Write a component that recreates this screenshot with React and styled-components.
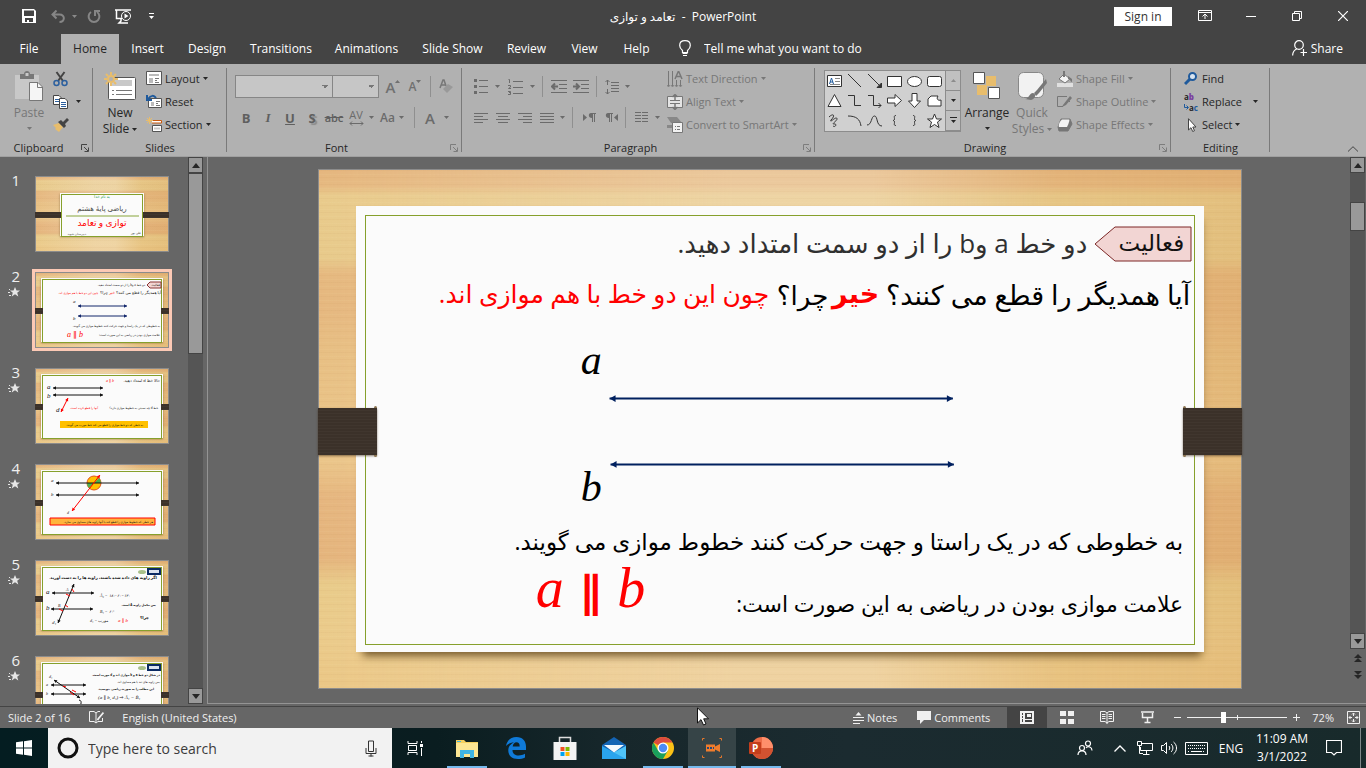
import styled, { createGlobalStyle, css } from 'styled-components';

const GlobalStyle = createGlobalStyle`
  * {
    box-sizing: border-box;
  }
  body {
    margin: 0;
    overflow: hidden;
    background: #666666;
    font-family: 'Open Sans', 'DejaVu Sans', sans-serif;
    font-size: 12px;
    color: #262626;
  }
  button, input, select {
    margin: 0;
    padding: 0;
    border: none;
    background: none;
    color: inherit;
    font: inherit;
  }
`;

const Ico = ({ w = 16, h = 16, children, ...rest }) => (
  <St.Svg width={w} height={h} viewBox={`0 0 ${w} ${h}`} fill='none' stroke='currentColor' aria-hidden='true' {...rest}>
    {children}
  </St.Svg>
);

const Caret = () => (
  <Ico w={5} h={3} stroke='none'>
    <path d='M0 0H5L2.5 3Z' fill='currentColor' />
  </Ico>
);

const Launcher = ({ off }) => (
  <St.Launcher aria-label='More options' $off={off}>
    <Ico w={8} h={8}>
      <path d='M.5 6V.5H6M3 3L7 7M7.5 3.5V7.5H3.5' />
    </Ico>
  </St.Launcher>
);

const Group = ({ title, width, launcher, off, children }) => (
  <St.Group $w={width}>
    <St.GroupBody>{children}</St.GroupBody>
    <St.GroupFoot>
      <St.GroupTitle>{title}</St.GroupTitle>
      {launcher && <Launcher off={off} />}
    </St.GroupFoot>
  </St.Group>
);

const TABS = [
  ['File', 58],
  ['Home', 58],
  ['Insert', 51],
  ['Design', 62],
  ['Transitions', 80],
  ['Animations', 85],
  ['Slide Show', 81],
  ['Review', 61],
  ['View', 49],
  ['Help', 49],
];

const TitleBar = () => (
  <St.TitleBar>
    <St.QuickAccess>
      <St.Tool $w={30} aria-label='Save'>
        <Ico w={14} h={14} stroke='none'>
          <path
            fill='#fff'
            fillRule='evenodd'
            d='M0 0H12L14 2V14H0ZM2 1.500V7H12V1.500ZM3 9V13H5V11H7V13H11V9Z'
          />
        </Ico>
      </St.Tool>
      <St.Tool $w={28} $c='#868686' aria-label='Undo'>
        <Ico w={14} h={13} strokeWidth='2'>
          <path d='M5.500 .500L1.500 4.500L5.500 8.500M1.500 4.500H8.500C14.500 4.500 14 12 8.500 12' />
        </Ico>
      </St.Tool>
      <St.Tool $w={4} $c='#8a8a8a' aria-label='Undo history'>
        <Caret />
      </St.Tool>
      <St.Tool $w={35} $c='#868686' aria-label='Redo'>
        <Ico w={14} h={14} strokeWidth='2'>
          <path d='M4 3A5.400 5.400 0 1 0 10 3M8 7V2H13' />
        </Ico>
      </St.Tool>
      <St.Tool $w={24} aria-label='Start from beginning'>
        <Ico w={17} h={15}>
          <path d='M0 1H16M1.500 1V9.500H7M6 10V12L4 14H13' strokeWidth='1.500' />
          <circle cx='11' cy='7' r='4.500' />
          <path d='M9.500 4.500L13.500 7L9.500 9.500Z' fill='currentColor' stroke='none' />
        </Ico>
      </St.Tool>
      <St.Tool $w={34} aria-label='Customize toolbar'>
        <Ico w={6} h={7} stroke='none'>
          <path d='M0 0H5V1H0ZM0 3H5L2.500 6Z' fill='currentColor' />
        </Ico>
      </St.Tool>
    </St.QuickAccess>
    <St.Title>تعامد و توازی &nbsp;-&nbsp; PowerPoint</St.Title>
    <St.WindowTools>
      <St.SignIn>Sign in</St.SignIn>
      <St.Tool $w={46} aria-label='Ribbon display options'>
        <Ico w={14} h={12}>
          <path d='M.5 .5H13.500V10.500H.5ZM.5 2.500H13.500M7 9V4.500M4.500 6.500L7 4L9.500 6.500' />
        </Ico>
      </St.Tool>
      <St.Tool $w={46} aria-label='Minimize'>
        <Ico w={10} h={10}>
          <path d='M0 5.500H10' />
        </Ico>
      </St.Tool>
      <St.Tool $w={46} aria-label='Restore'>
        <Ico w={10} h={10}>
          <path d='M.5 2.500H7.500V9.500H.5ZM2.500 2.500V.5H9.500V7.500H7.500' />
        </Ico>
      </St.Tool>
      <St.Tool $w={46} aria-label='Close'>
        <Ico w={10} h={10}>
          <path d='M0 0L10 10M10 0L0 10' strokeWidth='1.200' />
        </Ico>
      </St.Tool>
    </St.WindowTools>
  </St.TitleBar>
);

const TabBar = () => (
  <St.TabBar>
    {TABS.map(([name, width]) => (
      <St.Tab key={name} $w={width} $on={name === 'Home'}>
        {name}
      </St.Tab>
    ))}
    <St.TellMe>
      <Ico w={12} h={16}>
        <path d='M3.500 12.500V10.500C1.500 9 .7 7.500 .7 5.500C.7 2.500 3 .7 6 .7S11.300 2.500 11.300 5.500C11.300 7.500 10.500 9 8.500 10.500V12.500ZM3.500 13.500H8.500M4 15.500H8' strokeWidth='1.200' />
      </Ico>
      <St.TellInput aria-label='Tell me what you want to do' placeholder='Tell me what you want to do' />
    </St.TellMe>
    <St.Share>
      <Ico w={15} h={16}>
        <circle cx='7' cy='5' r='4.300' strokeWidth='1.200' />
        <path d='M.6 15.500C.8 11.500 2.500 9.800 5 8.800M8.500 12.500H15M11.500 9V16' strokeWidth='1.200' />
      </Ico>
      Share
    </St.Share>
  </St.TabBar>
);

const ClipboardGroup = () => (
  <Group title='Clipboard' width={93} launcher>
    <St.Big $w={44} $off $ml={7}>
      <Ico w={28} h={30} stroke='none'>
        <path d='M0 4H24V28H0Z' fill='#c8c8c8' />
        <path d='M5 3H9C9 -1 15 -1 15 3H19V8H5Z' fill='#777' />
        <rect x='10.500' y='2' width='3' height='3' fill='#c8c8c8' />
        <path d='M14.500 11.500H23L27.500 16V29.500H14.500Z' fill='#f5f5f5' stroke='#777' />
        <path d='M22.500 11.500V16.500H27.500' stroke='#777' fill='none' />
      </Ico>
      <span>Paste</span>
      <Caret />
    </St.Big>
    <St.Column>
      <St.Small aria-label='Cut'>
        <Ico w={16} h={16}>
          <path d='M3.500 1L10 10M11.500 1L5 10' stroke='#444' strokeWidth='2' />
          <circle cx='3.500' cy='12' r='2.500' stroke='#2b5f9e' strokeWidth='1.500' />
          <circle cx='11.500' cy='12' r='2.500' stroke='#2b5f9e' strokeWidth='1.500' />
        </Ico>
      </St.Small>
      <St.Small aria-label='Copy'>
        <Ico w={16} h={14}>
          <path d='M.5 .5H6L8.500 3V9.500H.5Z' fill='#fff' stroke='#444' />
          <path d='M2 4.500H6M2 6.500H6' stroke='#2b5f9e' />
          <path d='M6.500 3.500H12L14.500 6V13.500H6.500Z' fill='#fff' stroke='#444' />
          <path d='M8 7.500H13M8 9.500H13M8 11.500H13' stroke='#2b5f9e' />
        </Ico>
        <St.CaretPad>
          <Caret />
        </St.CaretPad>
      </St.Small>
      <St.Small aria-label='Format painter'>
        <Ico w={16} h={14} stroke='none'>
          <path d='M0 7L6 5L10 9L6 14L2 11L3 10Z' fill='#e8bd6c' />
          <path d='M5 4L8 2L10 4L14 0L16 2L12 6L13 8L11 10Z' fill='#444' />
        </Ico>
      </St.Small>
    </St.Column>
  </Group>
);

const SlidesGroup = () => (
  <Group title='Slides' width={134}>
    <St.Big $w={48} $ml={3}>
      <Ico w={32} h={28}>
        <rect x='4.500' y='5.500' width='27' height='22' rx='1' fill='#fff' stroke='#555' />
        <path d='M7 8H28V14H7Z' fill='#c8c8c8' stroke='none' />
        <path d='M8 18.500H10M12 18.500H28M8 22.500H10M12 22.500H28' stroke='#777' />
        <circle cx='7' cy='7' r='3' stroke='#e8bd6c' strokeWidth='2' fill='#b1b1b1' />
        <path d='M7 0V3M7 11V14M0 7H3M11 7H14M2 2L4 4M12 2L10 4M2 12L4 10M12 12L10 10' stroke='#e8bd6c' strokeWidth='2' />
      </Ico>
      <span>New</span>
      <St.Inline>
        Slide <Caret />
      </St.Inline>
    </St.Big>
    <St.Column>
      <St.Small>
        <Ico w={16} h={15}>
          <path d='M.5 .5H15.500V13.500H.5Z' fill='#fff' stroke='#555' />
          <path d='M3 3H13V5H3ZM3 7H7V12H3Z' fill='#bbb' stroke='none' />
          <path d='M9 7.500H13M9 9.500H11M9 11.500H13' stroke='#777' />
        </Ico>
        Layout <Caret />
      </St.Small>
      <St.Small>
        <Ico w={16} h={15}>
          <path d='M2.500 4.500H15.500V13.500H2.500Z' fill='#fff' stroke='#555' />
          <path d='M5 8H8V12H5Z' fill='#bbb' stroke='none' />
          <path d='M10 7.500H14M10 9.500H12M10 11.500H14' stroke='#777' />
          <path d='M1 1V6H6M2 5C5 1 8 1 10 4' stroke='#1f5a9c' strokeWidth='2' />
        </Ico>
        Reset
      </St.Small>
      <St.Small>
        <Ico w={16} h={15}>
          <path d='M6 3.500H15.500V6H6' stroke='#c8590f' fill='#fff' />
          <path d='M6.500 8.500H15.500V14.500H6.500Z' fill='#fff' stroke='#555' />
          <path d='M8 10.500H14V12.500H8Z' fill='#c8c8c8' stroke='none' />
          <path d='M3.500 0V7M0 3.500H7M1 1L6 6M6 1L1 6' stroke='#e8bd6c' />
        </Ico>
        Section <Caret />
      </St.Small>
    </St.Column>
  </Group>
);

const FontGroup = () => (
  <Group title='Font' width={235} launcher off>
    <St.Rows>
      <St.ToolRow>
        <St.Combo $w={98} aria-label='Font' />
        <St.Combo $w={46} $join aria-label='Font size' />
        <St.Tool $w={22} $c='#707070' aria-label='Increase font size'>
          <St.Letter $size={15}>A</St.Letter>
          <Ico w={5} h={14} stroke='none'>
            <path d='M0 3H5L2.500 0Z' fill='currentColor' />
          </Ico>
        </St.Tool>
        <St.Tool $w={22} $c='#707070' aria-label='Decrease font size'>
          <St.Letter $size={12}>A</St.Letter>
          <Ico w={5} h={14} stroke='none'>
            <path d='M0 0H5L2.500 3Z' fill='currentColor' />
          </Ico>
        </St.Tool>
        <St.Rule $m={4} />
        <St.Tool $w={22} $c='#777' aria-label='Clear formatting'>
          <Ico w={14} h={15}>
            <path d='M1 9L4 1H5L7 7M2 6H6' strokeWidth='1.500' />
            <path d='M4 10L9 5L14 8L8 14Z' fill='#999' stroke='none' />
          </Ico>
        </St.Tool>
      </St.ToolRow>
      <St.ToolRow>
        <St.Glyph $b>B</St.Glyph>
        <St.Glyph $i>I</St.Glyph>
        <St.Glyph $u>U</St.Glyph>
        <St.Glyph $b $shadow>
          S
        </St.Glyph>
        <St.Glyph $s>abc</St.Glyph>
        <St.Tool $w={22} $c='#6b6b6b' aria-label='Character spacing'>
          <St.Stack>
            <span>AV</span>
            <Ico w={15} h={5}>
              <path d='M1 2.500H14M3 .5L1 2.500L3 4.500M12 .5L14 2.500L12 4.500' />
            </Ico>
          </St.Stack>
        </St.Tool>
        <St.Tool $w={9} $c='#6b6b6b' aria-label='Spacing options'>
          <Caret />
        </St.Tool>
        <St.Tool $w={32} $c='#6b6b6b'>
          <St.Letter $size={12}>Aa</St.Letter>
          <St.CaretPad>
            <Caret />
          </St.CaretPad>
        </St.Tool>
        <St.Rule $m={6} />
        <St.Tool $w={18} $c='#6b6b6b'>
          <St.Letter $size={15}>A</St.Letter>
        </St.Tool>
        <St.Tool $w={14} $c='#6b6b6b' aria-label='Font colors'>
          <Caret />
        </St.Tool>
      </St.ToolRow>
    </St.Rows>
  </Group>
);

const LINES = {
  left: ['M0 .5H14', 'M0 3.500H9', 'M0 6.500H14', 'M0 9.500H9'],
  center: ['M0 .5H14', 'M2 3.500H12', 'M0 6.500H14', 'M2 9.500H12'],
  right: ['M0 .5H14', 'M5 3.500H14', 'M0 6.500H14', 'M5 9.500H14'],
  justify: ['M0 .5H14', 'M0 3.500H14', 'M0 6.500H14', 'M0 9.500H14'],
};

const Indent = ({ out }) => (
  <Ico w={16} h={14}>
    <path d='M0 .5H16M8 4.500H16M8 8.500H16M0 12.500H16' />
    {out ? <path d='M7 6.500H1M4 3.500L1 6.500L4 9.500' strokeWidth='2' /> : <path d='M0 6.500H6M3 3.500L6 6.500L3 9.500' strokeWidth='2' />}
  </Ico>
);

const ParagraphGroup = () => (
  <Group title='Paragraph' width={353} launcher off>
    <St.Rows $w={203}>
      <St.ToolRow>
        <St.Tool $w={22} $c='#6b6b6b' aria-label='Bullets'>
          <Ico w={14} h={15}>
            <path d='M5 1.500H14M5 7.500H14M5 13.500H14' />
            <path d='M0 0H3V3H0ZM0 6H3V9H0ZM0 12H3V15H0Z' fill='currentColor' stroke='none' />
          </Ico>
        </St.Tool>
        <St.Tool $w={11} $c='#6b6b6b' aria-label='Bullet styles'>
          <Caret />
        </St.Tool>
        <St.Tool $w={24} $c='#6b6b6b' aria-label='Numbering'>
          <Ico w={15} h={16}>
            <path d='M5 2.500H15M5 8.500H15M5 14.500H15M.5 .5H1.500V4M0 6.500H2.500V8L.5 9.500H3M0 12.500H2.500V15.500H0M1 13.500H2.500' />
          </Ico>
        </St.Tool>
        <St.Tool $w={10} $c='#6b6b6b' aria-label='Number styles'>
          <Caret />
        </St.Tool>
        <St.Rule $m={5} />
        <St.Tool $w={22} $c='#6b6b6b' aria-label='Decrease indent'>
          <Indent out />
        </St.Tool>
        <St.Tool $w={22} $c='#6b6b6b' aria-label='Increase indent'>
          <Indent />
        </St.Tool>
        <St.Rule $m={4} />
        <St.Tool $w={22} $c='#6b6b6b' aria-label='Line spacing'>
          <Ico w={14} h={16}>
            <path d='M6 3.500H14M6 6.500H14M6 9.500H14M6 12.500H14M2.500 1V6M2.500 10V15M.5 3L2.500 1L4.500 3M.5 13L2.500 15L4.500 13' />
          </Ico>
        </St.Tool>
        <St.Tool $w={9} $c='#6b6b6b' aria-label='Spacing options'>
          <Caret />
        </St.Tool>
      </St.ToolRow>
      <St.ToolRow>
        {Object.entries(LINES).map(([name, lines]) => (
          <St.Tool key={name} $w={22} $c='#6b6b6b' aria-label={`Align ${name}`}>
            <Ico w={14} h={10}>
              <path d={lines.join('')} />
            </Ico>
          </St.Tool>
        ))}
        <St.Tool $w={9} $c='#6b6b6b' aria-label='Justify options'>
          <Caret />
        </St.Tool>
        <St.Rule $m={5} />
        <St.Tool $w={22} $c='#6b6b6b' aria-label='Left to right'>
          <Ico w={13} h={9} stroke='none'>
            <path d='M0 1V8L4 4.500ZM8 0H13V1H12V9H11V1H10V9H9V5C5 5 5 0 8 0Z' fill='currentColor' />
          </Ico>
        </St.Tool>
        <St.Tool $w={22} $c='#6b6b6b' aria-label='Right to left'>
          <Ico w={13} h={9} stroke='none'>
            <path d='M13 1V8L9 4.500ZM3 0H8V1H7V9H6V1H5V9H4V5C0 5 0 0 3 0Z' fill='currentColor' />
          </Ico>
        </St.Tool>
        <St.Rule $m={3} />
        <St.Tool $w={24} $c='#6b6b6b' aria-label='Columns'>
          <Ico w={13} h={11}>
            <path d='M0 .5H6M0 3.500H6M0 6.500H6M0 9.500H6M7 .5H13M7 3.500H13M7 6.500H13M7 9.500H13' />
          </Ico>
        </St.Tool>
        <St.Tool $w={8} $c='#6b6b6b' aria-label='Column options'>
          <Caret />
        </St.Tool>
      </St.ToolRow>
    </St.Rows>
    <St.Column>
      <St.Small $off>
        <Ico w={16} h={16}>
          <path d='M1.500 0V15M5.500 0V15M9.500 9V15M13.500 9V15' />
          <path d='M0 14L1.500 16L3 14M4 14L5.500 16L7 14M8 14L9.500 16L11 14M12 14L13.500 16L15 14' strokeWidth='.8' />
          <path d='M8 8L11.500 0L15 8M9 5.500H14' strokeWidth='1.500' />
        </Ico>
        Text Direction <Caret />
      </St.Small>
      <St.Small $off>
        <Ico w={16} h={16}>
          <path d='M.5 2.500H15.500V13.500H.5Z' fill='#e4e4e4' />
          <path d='M3 6.500H13M3 9.500H13' />
          <path d='M8 0V6M8 10V16M5.500 3L8 .5L10.500 3M5.500 13L8 15.500L10.500 13' strokeWidth='1.500' />
        </Ico>
        Align Text <Caret />
      </St.Small>
      <St.Small $off>
        <Ico w={16} h={16}>
          <path d='M0 0H10L15 6H4Z' fill='#888' stroke='none' />
          <path d='M0 8H5V11H0Z' fill='#888' stroke='none' />
          <path d='M5.500 5.500H15.500V15.500H5.500Z' fill='#f2f2f2' />
          <path d='M8 9.500H9M10 9.500H13M8 12.500H9M10 12.500H13' />
        </Ico>
        Convert to SmartArt <Caret />
      </St.Small>
    </St.Column>
  </Group>
);

const SHAPES = [
  <><path d='M.5 2.500H14.500V13.500H.5Z' fill='#fff' /><path d='M2.500 11L4.500 5L6.500 11M3 9H6' stroke='#1f5a9c' /><path d='M8 5.500H13M8 8.500H13M3 11.500H13' stroke='#888' /></>,
  <path d='M1 1L14 14' />,
  <><path d='M1 1L14 14' /><path d='M14.500 10V14.500H10Z' fill='#333' /></>,
  <path d='M.5 3.500H14.500V13.500H.5Z' fill='#fff' />,
  <ellipse cx='7.500' cy='8.500' rx='7' ry='5' fill='#fff' />,
  <rect x='.5' y='3.500' width='14' height='10' rx='2' fill='#fff' />,
  <path d='M7.500 1.500L14 13.500H1Z' fill='#fff' />,
  <path d='M1 2.500H7.500V12.500H14' />,
  <path d='M1 2.500H6.500V12.500H14M11.500 10L14 12.500L11.500 15' />,
  <path d='M.5 5H8V1.500L14.500 7.500L8 13.500V10H.5Z' fill='#fff' />,
  <path d='M5 .5H10V8H13.500L7.500 14.500L1.500 8H5Z' fill='#fff' />,
  <path d='M4 3H11C9 6 11 8 14 7V13H1V6Z' fill='#fff' />,
  <path d='M2 4C6 0 9 2 4 7C2 11 10 2 10 6C10 8 4 11 7 11C10 10 9 15 6 13' />,
  <path d='M1 3C9 3 13 6 14 13' />,
  <path d='M0 12C5 12 4 3 7.500 3C11 3 9 13 15 13' />,
  <path d='M9 2.500C6.500 2.500 7.500 4.500 7.500 6C7.500 7.500 6 7.500 6 7.500C6 7.500 7.500 7.500 7.500 9C7.500 11 6.500 12.500 9 12.500' />,
  <path d='M6 2.500C8.500 2.500 7.500 4.500 7.500 6C7.500 7.500 9 7.500 9 7.500C9 7.500 7.500 7.500 7.500 9C7.500 11 8.500 12.500 6 12.500' />,
  <path d='M7.500 1L9.500 6H14.500L10.500 9L12 14.500L7.500 11.500L3 14.500L4.500 9L.5 6H5.500Z' fill='#fff' />,
];

const DrawingGroup = () => (
  <Group title='Drawing' width={356} launcher off>
    <St.Gallery>
      <St.Shapes>
        {SHAPES.map((shape, i) => (
          <St.Shape key={i} aria-label={`Shape ${i + 1}`}>
            <Ico w={15} h={16} stroke='#333'>
              {shape}
            </Ico>
          </St.Shape>
        ))}
      </St.Shapes>
      <St.GalleryScroll>
        <St.Tool $c='#8c8c8c' aria-label='Previous shapes'>
          <Ico w={5} h={3} stroke='none'>
            <path d='M0 3H5L2.500 0Z' fill='currentColor' />
          </Ico>
        </St.Tool>
        <St.Tool $c='#262626' aria-label='Next shapes'>
          <Caret />
        </St.Tool>
        <St.Tool $c='#262626' aria-label='All shapes'>
          <Ico w={7} h={7} stroke='none'>
            <path d='M0 0H7V1H0ZM1 3H6L3.500 6Z' fill='currentColor' />
          </Ico>
        </St.Tool>
      </St.GalleryScroll>
    </St.Gallery>
    <St.Big $w={50}>
      <Ico w={28} h={28}>
        <path d='M13 4H23V14H13ZM4 13H14V23H4Z' fill='#e8bd6c' stroke='none' />
        <path d='M.5 .5H11.500V11.500H.5ZM15.500 15.500H26.500V26.500H15.500Z' fill='#fff' stroke='#555' />
      </Ico>
      <span>Arrange</span>
      <Caret />
    </St.Big>
    <St.Big $w={40} $off>
      <Ico w={30} h={30}>
        <rect x='1.500' y='1.500' width='25' height='25' rx='5' fill='#f2f2f2' stroke='#888' />
        <path d='M29 8L20 19L17 22L19 25L22 22L30 12Z' fill='#777' stroke='none' />
        <path d='M8 28C12 28 12 22 16 22C20 23 18 28 14 29Z' fill='#777' stroke='none' />
      </Ico>
      <span>Quick</span>
      <St.Inline>
        Styles <Caret />
      </St.Inline>
    </St.Big>
    <St.Column $ml={3}>
      <St.Small $off>
        <Ico w={16} h={16} stroke='none'>
          <path d='M0 12H16V16H0Z' fill='#e0e0e0' />
          <path d='M7 3L13 8L8 12L2 8Z' fill='#f4f4f4' stroke='#777' />
          <path d='M6 0H8V6H6ZM11 5L15 8V11C13 11 14 8 11 8Z' fill='#777' />
        </Ico>
        Shape Fill <Caret />
      </St.Small>
      <St.Small $off>
        <Ico w={16} h={16}>
          <path d='M10 2.500H.5V12.500H6M12.500 7V8' />
          <path d='M6 11L13 2L15 4L9 11L5 13Z' fill='#777' stroke='none' />
        </Ico>
        Shape Outline <Caret />
      </St.Small>
      <St.Small $off>
        <Ico w={16} h={14}>
          <path d='M4 1H13L15 6L11 13H2L1 9Z' fill='#777' />
          <path d='M5 1.500H12C13 1.500 12 5 10 9H2C1 7 3 3 5 1.500Z' fill='#f4f4f4' stroke='none' />
        </Ico>
        Shape Effects <Caret />
      </St.Small>
    </St.Column>
  </Group>
);

const EditingGroup = () => (
  <Group title='Editing' width={99}>
    <St.Column $ml={11}>
      <St.Small>
        <Ico w={15} h={14}>
          <circle cx='8.500' cy='4.500' r='3.500' stroke='#1f5a9c' strokeWidth='2' fill='#d8e4f0' />
          <path d='M6 7L1 12' stroke='#1f5a9c' strokeWidth='3' />
        </Ico>
        Find
      </St.Small>
      <St.Small>
        <St.Swap>
          <span>
            a<b>b</b>
          </span>
          <span>
            <Ico w={5} h={6} stroke='#1f5a9c'>
              <path d='M.5 0V3.500H4M2.500 1.500L4.500 3.500L2.500 5.500' />
            </Ico>
            a<i>c</i>
          </span>
        </St.Swap>
        Replace
        <St.CaretPad $wide>
          <Caret />
        </St.CaretPad>
      </St.Small>
      <St.Small>
        <Ico w={15} h={14}>
          <path d='M4.500 .700V12L7 9.700L8.700 13.500L10.500 12.700L8.800 9H12Z' fill='#fff' stroke='#444' />
        </Ico>
        Select <Caret />
      </St.Small>
    </St.Column>
  </Group>
);

const Ribbon = () => (
  <St.Ribbon>
    <ClipboardGroup />
    <SlidesGroup />
    <FontGroup />
    <ParagraphGroup />
    <DrawingGroup />
    <EditingGroup />
    <St.Collapse aria-label='Collapse the ribbon'>
      <Ico w={12} h={6}>
        <path d='M1 5.500L6 .7L11 5.500' />
      </Ico>
    </St.Collapse>
  </St.Ribbon>
);

const Arrow = ({ x1, y1, x2, y2, color = '#111', w = 1, size = 3 }) => {
  const a = (Math.atan2(y2 - y1, x2 - x1) * 180) / Math.PI;
  const head = `M0 0L${-size} ${-size / 1.8}V${size / 1.8}Z`;
  return (
    <g fill={color} stroke='none'>
      <line x1={x1} y1={y1} x2={x2} y2={y2} stroke={color} strokeWidth={w} />
      <path d={head} transform={`translate(${x2} ${y2}) rotate(${a})`} />
      <path d={head} transform={`translate(${x1} ${y1}) rotate(${a + 180})`} />
    </g>
  );
};

const ThumbOne = () => (
  <>
    <St.Tiny x='66' y='21' $size={4} $mid $c='#1a9a50'>به نام خدا</St.Tiny>
    <St.Tiny x='66' y='34' $size={7} $mid $c='#444'>ریاضی پایهٔ هشتم</St.Tiny>
    <path d='M30 39H103' stroke='#87a53a' />
    <St.Tiny x='66' y='49' $size={9} $mid $c='#f00'>توازی و تعامد</St.Tiny>
    <St.Tiny x='105' y='57' $size={3}>علی پور</St.Tiny>
    <St.Tiny x='50' y='58' $size={3} $c='#555'>دبیرستان شهید</St.Tiny>
  </>
);

const ThumbTwo = () => (
  <>
    <path d='M125 9V15H114L111 12L114 9Z' fill='#f2d5d3' stroke='#8a3434' />
    <St.Tiny x='124' y='13' $size={3}>فعالیت</St.Tiny>
    <St.Tiny x='109' y='13' $size={3}>دو خط a وb را از دو سمت امتداد دهید.</St.Tiny>
    <St.Tiny x='125' y='21' $size={4}>آیا همدیگر را قطع می کنند؟</St.Tiny>
    <St.Tiny x='79' y='21' $size={4} $c='#f00'>خیر</St.Tiny>
    <St.Tiny x='72' y='21' $size={4}>چرا؟</St.Tiny>
    <St.Tiny x='62' y='21' $size={3} $c='#f00'>چون این دو خط با هم موازی اند.</St.Tiny>
    <St.TinyMath x='37' y='30' $size={5}>a</St.TinyMath>
    <Arrow x1={42} y1={33} x2={91} y2={33} color='#12276b' />
    <Arrow x1={42} y1={43} x2={91} y2={43} color='#12276b' />
    <St.TinyMath x='37' y='47' $size={5}>b</St.TinyMath>
    <St.Tiny x='124' y='54' $size={3}>به خطوطی که در یک راستا و جهت حرکت کنند خطوط موازی می گویند.</St.Tiny>
    <St.Tiny x='124' y='63' $size={3}>علامت موازی بودن در ریاضی به این صورت است:</St.Tiny>
    <St.TinyMath x='31' y='64' $size={8} $c='#f00'>a ∥ b</St.TinyMath>
  </>
);

const ThumbThree = () => (
  <>
    <St.Tiny x='124' y='13' $size={4}>حالا خط d امتداد دهید.</St.Tiny>
    <St.TinyMath x='70' y='13' $size={4} $c='#f00'>a ∥ b</St.TinyMath>
    <St.TinyMath x='11' y='20' $size={7}>a</St.TinyMath>
    <Arrow x1={17} y1={19} x2={67} y2={19} />
    <St.TinyMath x='11' y='29' $size={7}>b</St.TinyMath>
    <Arrow x1={17} y1={26} x2={67} y2={26} />
    <St.TinyMath x='20' y='43' $size={7}>d</St.TinyMath>
    <Arrow x1={25} y1={43} x2={32} y2={29} color='#f00' />
    <St.Tiny x='122' y='40' $size={3}>خط d چه نسبتی به خطوط موازی دارد؟</St.Tiny>
    <St.Tiny x='62' y='40' $size={3} $c='#f00'>آنها را قطع کرده است.</St.Tiny>
    <path d='M24 52H112V59H24Z' fill='#ffc000' />
    <St.Tiny x='107' y='57' $size={3}>به خطی که دو خط موازی را قطع می کند خط مورب می گویند.</St.Tiny>
  </>
);

const ThumbFour = () => (
  <>
    <circle cx='58' cy='18' r='7' fill='#ffc000' stroke='#e2531a' />
    <path d='M58 18H51A7 7 0 0 0 53 23ZM58 18H65A7 7 0 0 0 63 13Z' fill='#4db050' />
    <St.TinyMath x='15' y='17' $size={5}>a</St.TinyMath>
    <Arrow x1={20} y1={18} x2={103} y2={18} />
    <St.TinyMath x='15' y='31' $size={5}>b</St.TinyMath>
    <Arrow x1={20} y1={30} x2={103} y2={30} />
    <Arrow x1={36} y1={46} x2={64} y2={10} color='#f00' />
    <St.TinyMath x='31' y='49' $size={4}>d</St.TinyMath>
    <path d='M14 53H119V60H14Z' fill='#ffb43c' stroke='#f00' />
    <St.Tiny x='117' y='58' $size={3}>هر خطی که خطوط موازی را قطع کند،با آنها زاویه های مساوی می سازد.</St.Tiny>
  </>
);

const ThumbFive = () => (
  <>
    <path d='M112 8H124V13H112Z' fill='#dce3ef' stroke='#0b2a63' strokeWidth='2' />
    <ellipse cx='106' cy='11' rx='4' ry='2' fill='#a9c08a' />
    <St.Tiny x='121' y='18' $size={4} $bold>اگر زاویه های داده شده باشند، زاویه ها را به دست آورید.</St.Tiny>
    <St.TinyMath x='10' y='33' $size={7}>a</St.TinyMath>
    <Arrow x1={16} y1={32} x2={58} y2={32} />
    <St.TinyMath x='10' y='49' $size={7}>b</St.TinyMath>
    <Arrow x1={15} y1={48} x2={57} y2={48} />
    <Arrow x1={22} y1={62} x2={38} y2={23} />
    <St.TinyMath x='30' y='30' $size={4}>A</St.TinyMath>
    <St.TinyMath x='22' y='46' $size={4}>B</St.TinyMath>
    <path d='M30 33L34 35M36 28L38 31M23 48L27 50M29 44L32 46' stroke='#f00' />
    <St.TinyMath x='16' y='63' $size={5}>d₁</St.TinyMath>
    <St.TinyMath x='64' y='36' $size={4}>Â₂ = ۱۸۰−۶۰=۱۲۰</St.TinyMath>
    <St.Tiny x='120' y='45' $size={3} $bold>پس مکمل زاویه A است.</St.Tiny>
    <St.TinyMath x='64' y='52' $size={4}>B₁ = ۶۰°</St.TinyMath>
    <St.TinyMath x='54' y='61' $size={4}>d₁ = مورب</St.TinyMath>
    <St.TinyMath x='82' y='61' $size={5} $c='#f00'>a ∥ b</St.TinyMath>
    <St.Tiny x='113' y='58' $size={4} $bold>چرا؟</St.Tiny>
  </>
);

const ThumbSix = () => (
  <>
    <path d='M112 8H124V13H112Z' fill='#dce3ef' stroke='#0b2a63' strokeWidth='2' />
    <ellipse cx='106' cy='11' rx='4' ry='2' fill='#a9c08a' />
    <St.Tiny x='124' y='19' $size={3} $bold>در شکل دو خط a و b موازی اند و d مورب است.</St.Tiny>
    <St.Tiny x='124' y='26' $size={3}>پس زاویه های تند با هم مساوی اند.</St.Tiny>
    <St.Tiny x='118' y='33' $size={3} $bold>این مطلب را به صورت ریاضی بنویسید.</St.Tiny>
    <Arrow x1={15} y1={28} x2={50} y2={28} />
    <Arrow x1={15} y1={37} x2={50} y2={37} />
    <Arrow x1={18} y1={23} x2={44} y2={41} />
    <path d='M34 35L38 38M36 33L40 35M27 29L30 30' stroke='#f00' />
    <St.TinyMath x='13' y='21' $size={4}>d₁</St.TinyMath>
    <St.TinyMath x='10' y='29' $size={4}>a</St.TinyMath>
    <St.TinyMath x='10' y='38' $size={4}>b</St.TinyMath>
    <St.TinyMath x='62' y='42' $size={5}>(a ∥ b, d₁) ⇒ Â₁ = B̂₁</St.TinyMath>
    <path d='M43 43C48 44 42 50 46 52' stroke='#111' fill='none' />
  </>
);

const THUMBS = [ThumbOne, ThumbTwo, ThumbThree, ThumbFour, ThumbFive, ThumbSix];

const SlideBase = ({ small, cover }) => (
  <>
    <St.Paper $small={small} $cover={cover} />
    <St.Clip $side='left' $cover={cover} $small={small} />
    <St.Clip $side='right' $cover={cover} $small={small} />
  </>
);

const ScrollBar = ({ before, size, foot, children }) => (
  <St.ScrollBar $foot={foot}>
    <St.ScrollButton aria-label='Scroll up'>
      <Ico w={8} h={5} stroke='none'>
        <path d='M0 5H8L4 0Z' fill='#262626' />
      </Ico>
    </St.ScrollButton>
    <St.ScrollTrack $before={before}>
      <St.ScrollThumb $h={size} />
    </St.ScrollTrack>
    <St.ScrollButton aria-label='Scroll down'>
      <Ico w={8} h={5} stroke='none'>
        <path d='M0 0H8L4 5Z' fill='#262626' />
      </Ico>
    </St.ScrollButton>
    {children}
  </St.ScrollBar>
);

const ThumbPane = () => (
  <St.ThumbPane>
    <St.ThumbList>
      {THUMBS.map((Drawing, i) => (
        <St.ThumbItem key={i}>
          <St.ThumbMeta>
            {i + 1}
            {i > 0 && (
              <Ico w={12} h={10} stroke='none'>
                <path d='M7 0L8.500 3.500H12L9.200 5.800L10.300 9.500L7 7.300L3.700 9.500L4.800 5.800L2 3.500H5.500Z' fill='#e6e6e6' />
                <path d='M1 2H2V3H1ZM0 5H2V6H0ZM1 8H3V9H1Z' fill='#e6e6e6' />
              </Ico>
            )}
          </St.ThumbMeta>
          <St.Thumb $on={i === 1} aria-label={`Slide ${i + 1}`}>
            <SlideBase small cover={i === 0} />
            <St.ThumbDrawing viewBox='0 0 132 74'>
              <Drawing />
            </St.ThumbDrawing>
          </St.Thumb>
        </St.ThumbItem>
      ))}
    </St.ThumbList>
    <ScrollBar before={0} size={181} />
  </St.ThumbPane>
);

const Stage = () => (
  <St.Stage>
    <St.StageCenter>
      <St.Slide>
        <SlideBase />
        <St.Callout>
          <svg viewBox='0 0 98 36' preserveAspectRatio='none' aria-hidden='true'>
            <path d='M1 18L21 1H97V35H21Z' fill='#f2d5d3' stroke='#7c2727' />
          </svg>
          <span>فعالیت</span>
        </St.Callout>
        <St.Line $top={53} $right={154} $size={26} $c='#303030'>
          دو خط a وb را از دو سمت امتداد دهید.
        </St.Line>
        <St.Line $top={105} $right={51} $size={27}>
          آیا همدیگر را قطع می کنند؟
        </St.Line>
        <St.Line $top={103} $right={362} $size={27} $c='#ff0000' $bold>
          خیر
        </St.Line>
        <St.Line $top={105} $right={413} $size={26}>
          چرا؟
        </St.Line>
        <St.Line $top={103} $right={472} $size={25} $c='#ff0000'>
          چون این دو خط با هم موازی اند.
        </St.Line>
        <St.Math $top={160} $left={262} $size={42}>a</St.Math>
        <St.SlideLines viewBox='0 0 922 519'>
          <Arrow x1={290} y1={229} x2={634} y2={229} color='#00205f' w={2} size={6} />
          <Arrow x1={291} y1={295} x2={635} y2={295} color='#00205f' w={2} size={6} />
        </St.SlideLines>
        <St.Math $top={287} $left={262} $size={42}>b</St.Math>
        <St.Line $top={351} $right={58} $size={23}>
          به خطوطی که در یک راستا و جهت حرکت کنند خطوط موازی می گویند.
        </St.Line>
        <St.Line $top={413} $right={58} $size={22}>
          علامت موازی بودن در ریاضی به این صورت است:
        </St.Line>
        <St.Math $top={388} $left={217} $size={56} $c='#ff0000'>
          a <i>∥</i> b
        </St.Math>
      </St.Slide>
    </St.StageCenter>
    <ScrollBar before={29} size={29} foot={20}>
      <St.ScrollJump aria-label='Previous slide'>
        <Ico w={8} h={8} stroke='none'>
          <path d='M0 4H8L4 0ZM0 8H8L4 4Z' fill='#262626' />
        </Ico>
      </St.ScrollJump>
      <St.ScrollJump aria-label='Next slide'>
        <Ico w={8} h={8} stroke='none'>
          <path d='M0 0H8L4 4ZM0 4H8L4 8Z' fill='#262626' />
        </Ico>
      </St.ScrollJump>
    </ScrollBar>
  </St.Stage>
);

const StatusBar = () => (
  <St.StatusBar>
    <span>Slide 2 of 16</span>
    <St.Tool $w={52} aria-label='Spelling'>
      <Ico w={15} h={13}>
        <path d='M7 12V2L5 .5H.5V10.500H5L7 12L9 10.500H13.500V7M7 2L9 .5H11' />
        <path d='M14.500 1.500L9.500 7.500L8.500 9' strokeWidth='1.800' />
      </Ico>
    </St.Tool>
    <span>English (United States)</span>
    <St.Spacer />
    <St.StatusButton $mr={20}>
      <Ico w={11} h={12}>
        <path d='M0 5.500H11M0 8.500H11M0 11.500H7' />
        <path d='M2.500 3.500L5.500 0L8.500 3.500Z' fill='currentColor' stroke='none' />
      </Ico>
      Notes
    </St.StatusButton>
    <St.StatusButton $mr={17}>
      <Ico w={14} h={13} stroke='none'>
        <path d='M0 0H14V9H7L3 13V9H0Z' fill='currentColor' />
      </Ico>
      Comments
    </St.StatusButton>
    <St.View $on aria-label='Normal view'>
      <Ico w={14} h={13} stroke='none'>
        <path d='M0 0H14V13H0ZM2 2V4H3V2ZM2 5V7H3V5ZM2 8V11H3V8ZM5 2V8H12V2ZM5 9V11H12V9Z' fill='currentColor' fillRule='evenodd' />
        <path d='M7 3H11V6H7Z' fill='currentColor' />
      </Ico>
    </St.View>
    <St.View aria-label='Slide sorter'>
      <Ico w={14} h={13} stroke='none'>
        <path d='M0 0H6V5H0ZM8 0H14V5H8ZM0 8H6V13H0ZM8 8H14V13H8Z' fill='currentColor' />
      </Ico>
    </St.View>
    <St.View aria-label='Reading view'>
      <Ico w={14} h={13}>
        <path d='M7 2V13M.5 .5H5L7 2L9 .5H13.500V10.500H9L7 12L5 10.500H.5ZM2 3.500H5.500M2 5.500H5.500M2 7.500H5.500M8.500 3.500H12M8.500 5.500H12M8.500 7.500H12' />
      </Ico>
    </St.View>
    <St.View aria-label='Slide show'>
      <Ico w={13} h={13}>
        <path d='M0 1H13M1.500 2V6.500H11.500V2M6.500 7V11M3.500 11.500H9.500' strokeWidth='1.500' />
      </Ico>
    </St.View>
    <St.Tool $w={20} aria-label='Zoom out'>
      <Ico w={7} h={7}>
        <path d='M0 3.500H7' />
      </Ico>
    </St.Tool>
    <St.Zoom type='range' aria-label='Zoom' defaultValue={35} />
    <St.Tool $w={18} aria-label='Zoom in'>
      <Ico w={7} h={7}>
        <path d='M0 3.500H7M3.500 0V7' />
      </Ico>
    </St.Tool>
    <St.StatusButton $mr={9} $ml={7}>
      72%
    </St.StatusButton>
    <St.Tool $w={20} aria-label='Fit slide to window'>
      <Ico w={13} h={13}>
        <path d='M.5 .5H12.500V12.500H.5Z' />
        <path d='M6.500 2V5M6.500 8V11M2 6.500H5M8 6.500H11M5 3.500L6.500 2L8 3.500M5 9.500L6.500 11L8 9.500M3.500 5L2 6.500L3.500 8M9.500 5L11 6.500L9.500 8' />
      </Ico>
    </St.Tool>
  </St.StatusBar>
);

const TaskBar = () => (
  <St.TaskBar>
    <St.Start aria-label='Start'>
      <Ico w={16} h={16} stroke='none'>
        <path d='M0 2.300L7 1.300V7.500H0ZM8 1.200L16 0V7.500H8ZM0 8.500H7V14.700L0 13.700ZM8 8.500H16V16L8 14.800Z' fill='#fff' />
      </Ico>
    </St.Start>
    <St.Search>
      <Ico w={22} h={22}>
        <circle cx='11' cy='11' r='9' strokeWidth='3' stroke='#111' />
      </Ico>
      <St.SearchInput aria-label='Search' placeholder='Type here to search' />
      <Ico w={12} h={17}>
        <path d='M3.500 1H8.500V11.500H3.500ZM1 8V13.500H11V8M6 14V16.500M3.500 16H8.500' stroke='#333' />
      </Ico>
    </St.Search>
    <St.Apps>
      <St.App aria-label='Task view'>
        <Ico w={17} h={16}>
          <path d='M1 1V3.500H10V1M1 15V12.500H10V15M1.500 5.500H9.500V10.500H1.500ZM14.500 1V3M14.500 8V16' />
          <path d='M13 4H16V7H13Z' fill='currentColor' stroke='none' />
        </Ico>
      </St.App>
      <St.App $run aria-label='File Explorer'>
        <Ico w={22} h={19} stroke='none'>
          <path d='M0 1H8L10 3H22V18H0Z' fill='#f5cf5e' />
          <path d='M0 4H22V18H0Z' fill='#fde694' />
          <path d='M4 11H18V19H14V15H8V19H4Z' fill='#3fb4e5' />
          <path d='M1 2H5V3H1Z' fill='#3fb4e5' />
        </Ico>
      </St.App>
      <St.App aria-label='Edge'>
        <Ico w={20} h={22} stroke='none'>
          <path
            d='M0 9C1 3 5 0 10.500 0C16.500 0 20 4 20 9.500V13H6.500C6.500 17 9.500 18.500 12.500 18.500C15 18.500 17 17.800 19 16.800V20.500C17 21.500 14.500 22 12 22C6 22 2.300 18.500 2.300 13.500C2.300 9.500 4.500 7 8 5.500C4.500 5.500 1.700 7 0 9ZM6.700 9.500H13.700C13.700 6.500 12.500 5.200 10.500 5.200C8.500 5.200 7 7 6.700 9.500Z'
            fill='#0f7ad8'
            fillRule='evenodd'
          />
        </Ico>
      </St.App>
      <St.App aria-label='Store'>
        <Ico w={24} h={25} stroke='none'>
          <path d='M6.500 6V1.500H17.500V6' stroke='#ddd' strokeWidth='1.500' fill='none' />
          <path d='M.5 6H23.500V24H.5Z' fill='#f3f3f3' />
          <path d='M7.500 11H11.500V15H7.500Z' fill='#f25022' />
          <path d='M12.500 11H16.500V15H12.500Z' fill='#7fba00' />
          <path d='M7.500 16H11.500V20H7.500Z' fill='#00a4ef' />
          <path d='M12.500 16H16.500V20H12.500Z' fill='#ffb900' />
        </Ico>
      </St.App>
      <St.App aria-label='Mail'>
        <Ico w={24} h={22} stroke='none'>
          <path d='M0 8L12 0L24 8V22H0Z' fill='#1464b4' />
          <path d='M0 9L12 15.500L24 9V22H0Z' fill='#2aa4ee' />
          <path d='M12 15.500L24 9V22Z' fill='#4fc3f7' />
          <path d='M2 8H22L12 15.500Z' fill='#f4f8fc' />
        </Ico>
      </St.App>
      <St.App $run aria-label='Chrome'>
        <Ico w={22} h={22} stroke='none'>
          <circle cx='11' cy='11' r='11' fill='#fbc116' />
          <path d='M11 11L1.470 5.500A11 11 0 0 1 20.530 5.500H11Z' fill='#dd4b3e' />
          <path d='M1.470 5.500A11 11 0 0 0 11 22L15.800 13.700L6.200 13.700Z' fill='#1a9f5c' />
          <circle cx='11' cy='11' r='5.500' fill='#fff' />
          <circle cx='11' cy='11' r='4.200' fill='#4c8bf5' />
        </Ico>
      </St.App>
      <St.App $run $on aria-label='Screen recorder'>
        <Ico w={20} h={20}>
          <path d='M.5 2.500V.5H2.500M17.500 .5H19.500V2.500M.5 17.500V19.500H2.500M17.500 19.500H19.500V17.500' stroke='#e8792b' />
          <path d='M4 6.500H13V8.500L18 6V14L13 11.500V13.500H4Z' fill='#f07c2c' stroke='none' />
          <path d='M5 9H7V11H5ZM8 9H10V11H8ZM11 9H12V11H11Z' fill='#264a7a' stroke='none' />
        </Ico>
      </St.App>
      <St.App $run aria-label='PowerPoint'>
        <Ico w={24} h={22} stroke='none'>
          <circle cx='13' cy='11' r='11' fill='#ed6c47' />
          <path d='M13 0A11 11 0 0 1 24 11H13Z' fill='#ff8f6b' />
          <path d='M24 11A11 11 0 0 1 2 11Z' fill='#d35230' />
          <rect x='0' y='5' width='12' height='12' rx='1' fill='#c43e1c' />
          <text x='3' y='15' fontSize='10' fontWeight='700' fill='#fff'>
            P
          </text>
        </Ico>
      </St.App>
    </St.Apps>
    <St.Spacer />
    <St.Tray>
      <St.Tool $w={44} aria-label='People'>
        <Ico w={16} h={16}>
          <circle cx='11' cy='3.500' r='2.500' strokeWidth='1.200' />
          <circle cx='5' cy='8' r='2.500' strokeWidth='1.200' />
          <path d='M1 15C1 9.500 9 9.500 9 15M9 8C11 5.500 15 7 15 10.500' strokeWidth='1.200' />
        </Ico>
      </St.Tool>
      <St.Tool $w={26} aria-label='Hidden icons'>
        <Ico w={12} h={7}>
          <path d='M.5 6.500L6 1L11.500 6.500' strokeWidth='1.300' />
        </Ico>
      </St.Tool>
      <St.Tool $w={24} aria-label='Network'>
        <Ico w={16} h={14}>
          <path d='M5 2.500H15.500V9.500H3.500V6M9.500 10V13M6 13.500H12.500M.5 .5H4.500V4.500H.5ZM2.500 5V12.500H6' />
        </Ico>
      </St.Tool>
      <St.Tool $w={24} aria-label='Volume'>
        <Ico w={17} h={14}>
          <path d='M.5 4.500H2.500L5.500 1.500V12.500L2.500 9.500H.5ZM8 5C9 6 9 8 8 9M10 3C12.500 5 12.500 9 10 11M12.500 1C16.500 4 16.500 10 12.500 13' />
        </Ico>
      </St.Tool>
      <St.Tool $w={30} aria-label='Keyboard'>
        <Ico w={23} h={13}>
          <path d='M.5 .5H22.500V12.500H.5ZM6 9.500H17' />
          <path d='M3 3.500H20M3 6.500H20M3 9.500H5M18 9.500H20' strokeDasharray='1 1' />
        </Ico>
      </St.Tool>
      <St.Tool $w={40}>ENG</St.Tool>
      <St.Clock>
        <span>11:09 AM</span>
        <span>3/1/2022</span>
      </St.Clock>
      <St.Tool $w={42} aria-label='Notifications'>
        <Ico w={16} h={16}>
          <path d='M.5 .5H15.500V12.500H10.500L8 15L5.500 12.500H.5Z' strokeWidth='1.200' />
        </Ico>
      </St.Tool>
      <St.Peek aria-label='Show desktop' />
    </St.Tray>
  </St.TaskBar>
);

const App = () => (
  <>
    <GlobalStyle />
    <St.Window>
      <TitleBar />
      <TabBar />
      <Ribbon />
      <St.Workspace>
        <ThumbPane />
        <Stage />
      </St.Workspace>
      <StatusBar />
      <TaskBar />
      <St.Cursor width='12' height='19' viewBox='0 0 12 19' aria-hidden='true'>
        <path d='M.5 .8V16L4 12.600L6.500 18L9 17L6.700 11.800H11.500Z' fill='#fff' stroke='#111' />
      </St.Cursor>
    </St.Window>
  </>
);

export default App;

const wood = css`
  background-image: repeating-linear-gradient(
      180deg,
      rgba(150, 90, 30, 0.04) 0 1px,
      transparent 1px 4px,
      rgba(255, 240, 200, 0.05) 4px 5px,
      transparent 5px 7px
    ),
    linear-gradient(
      90deg,
      transparent,
      rgba(244, 226, 200, 0.4) 45%,
      rgba(244, 226, 200, 0.4) 60%,
      rgba(205, 145, 70, 0.1) 80%,
      rgba(205, 145, 70, 0.2)
    ),
    linear-gradient(
      180deg,
      #e5b67e 0%,
      #e6b981 3%,
      #e9cb8c 5%,
      #e8ca8b 17%,
      #e6b980 20%,
      #e6b880 27%,
      #e8c084 36%,
      #ebc68a 56%,
      #e6b67f 63%,
      #e5b57d 75%,
      #e9cb8a 80%,
      #ebcb8b 90%,
      #ebc786 100%
    );
`;

const St = {
  Window: styled.div`
    display: flex;
    flex-direction: column;
    height: 100vh;
    min-height: 600px;
  `,
  Svg: styled.svg`
    display: block;
    flex: none;
  `,
  Spacer: styled.div`
    flex: 1;
  `,
  Inline: styled.span`
    display: flex;
    align-items: center;
    gap: 3px;
  `,
  Tool: styled.button`
    display: flex;
    align-items: center;
    justify-content: center;
    flex: none;
    width: ${({ $w }) => ($w ? `${$w}px` : 'auto')};
    height: 100%;
    color: ${({ $c }) => $c || 'inherit'};
  `,

  TitleBar: styled.header`
    display: grid;
    grid-template-columns: 1fr auto 1fr;
    align-items: center;
    height: 32px;
    background: #444444;
    color: #ffffff;
  `,
  QuickAccess: styled.div`
    display: flex;
    height: 32px;
    padding-left: 14px;
  `,
  Title: styled.h1`
    margin: 0;
    font-size: 12px;
    font-weight: 400;
  `,
  WindowTools: styled.div`
    display: flex;
    align-items: center;
    justify-content: flex-end;
    height: 30px;
  `,
  SignIn: styled.button`
    width: 58px;
    height: 19px;
    margin-right: 10px;
    background: #ffffff;
    color: #333333;
  `,

  TabBar: styled.nav`
    display: flex;
    gap: 3px;
    height: 32px;
    padding-top: 2px;
    background: #444444;
    color: #ffffff;
  `,
  Tab: styled.button`
    flex: none;
    width: ${({ $w }) => $w}px;
    padding-bottom: 2px;
    white-space: nowrap;
    background: ${({ $on }) => ($on ? '#b1b1b1' : 'transparent')};
    color: ${({ $on }) => ($on ? '#262626' : '#ffffff')};
  `,
  TellMe: styled.label`
    display: flex;
    align-items: center;
    gap: 13px;
    margin-left: 15px;
    padding-bottom: 2px;
  `,
  TellInput: styled.input`
    width: 180px;

    &::placeholder {
      color: #ffffff;
      opacity: 1;
    }
  `,
  Share: styled.button`
    display: flex;
    align-items: center;
    gap: 4px;
    margin-left: auto;
    padding: 0 23px 2px 0;
  `,

  Ribbon: styled.div`
    display: flex;
    height: 93px;
    background: #b1b1b1;
    border-bottom: 1px solid #a0a0a0;
  `,
  Group: styled.section`
    position: relative;
    display: flex;
    flex-direction: column;
    flex: none;
    width: ${({ $w }) => $w}px;

    &::after {
      content: '';
      position: absolute;
      top: 4px;
      right: 0;
      bottom: 4px;
      width: 1px;
      background: #7a7a7a;
    }
  `,
  GroupBody: styled.div`
    display: flex;
    height: 75px;
    padding-top: 3px;
  `,
  GroupFoot: styled.div`
    display: flex;
    align-items: center;
    height: 17px;
    font-size: 11px;
  `,
  GroupTitle: styled.span`
    flex: 1;
    text-align: center;
  `,
  Launcher: styled.button`
    display: flex;
    justify-content: center;
    width: 16px;
    color: ${({ $off }) => ($off ? '#7d7d7d' : '#444444')};
  `,
  Big: styled.button`
    display: flex;
    flex-direction: column;
    align-items: center;
    flex: none;
    width: ${({ $w }) => $w}px;
    margin-left: ${({ $ml = 0 }) => $ml}px;
    padding-top: 3px;
    line-height: 16px;
    color: ${({ $off }) => ($off ? '#777777' : '#262626')};

    > svg:first-child {
      height: 32px;
      margin-bottom: 3px;
    }
    > svg:last-child {
      margin-top: 6px;
    }
  `,
  Column: styled.div`
    display: flex;
    flex-direction: column;
    margin-left: ${({ $ml = 0 }) => $ml}px;
  `,
  Small: styled.button`
    display: flex;
    align-items: center;
    gap: 3px;
    height: 23px;
    padding: 0 2px;
    white-space: nowrap;
    font-size: 11px;
    color: ${({ $off }) => ($off ? '#777777' : '#262626')};
  `,
  CaretPad: styled.span`
    padding-left: ${({ $wide }) => ($wide ? 8 : 4)}px;
  `,
  Rows: styled.div`
    display: flex;
    flex-direction: column;
    flex: none;
    gap: 8px;
    width: ${({ $w }) => ($w ? `${$w}px` : '100%')};
    padding: 8px 0 0 8px;
  `,
  ToolRow: styled.div`
    display: flex;
    align-items: center;
    height: 23px;
  `,
  Rule: styled.span`
    width: 1px;
    height: 21px;
    margin: 0 ${({ $m }) => $m}px;
    background: #8f8f8f;
  `,
  Combo: styled.select`
    width: ${({ $w }) => $w}px;
    height: 23px;
    margin-right: ${({ $join }) => ($join ? '3px' : 0)};
    border: 1px solid #868686;
    border-left-width: ${({ $join }) => ($join ? 0 : '1px')};
    border-radius: 0;
    appearance: none;
    background: linear-gradient(45deg, transparent 50%, #777777 50%) right 7px center / 3px 3px no-repeat,
      linear-gradient(-45deg, transparent 50%, #777777 50%) right 4px center / 3px 3px no-repeat, #c6c6c6;
  `,
  Letter: styled.span`
    font-size: ${({ $size }) => $size}px;
    font-weight: 600;
    line-height: 20px;
  `,
  Glyph: styled.button`
    width: 22px;
    height: 23px;
    color: #5f5f5f;
    font-size: ${({ $s }) => ($s ? 11 : 13)}px;
    font-weight: ${({ $b, $u }) => ($b || $u ? 700 : 600)};
    font-style: ${({ $i }) => ($i ? 'italic' : 'normal')};
    font-family: ${({ $i }) => ($i ? "'Liberation Serif', serif" : 'inherit')};
    text-decoration: ${({ $u, $s }) => ($u ? 'underline' : $s ? 'line-through' : 'none')};
    text-shadow: ${({ $shadow }) => ($shadow ? '2px 2px 1px #8a8a8a' : 'none')};
  `,
  Stack: styled.span`
    display: flex;
    flex-direction: column;
    align-items: center;
    font-size: 11px;
    line-height: 12px;
  `,
  Gallery: styled.div`
    display: flex;
    flex: none;
    width: 137px;
    height: 62px;
    margin: 3px 1px 0 9px;
    border: 1px solid #8c8c8c;
    background: #d0d0d0;
  `,
  Shapes: styled.div`
    display: grid;
    grid-template-columns: repeat(6, 20px);
    grid-template-rows: repeat(3, 20px);
  `,
  Shape: styled.button`
    display: flex;
    align-items: center;
    justify-content: center;
    padding-right: 1px;
  `,
  GalleryScroll: styled.div`
    display: grid;
    flex: 1;
    grid-template-rows: repeat(3, 20px);

    button {
      border-left: 1px solid #8c8c8c;
      border-bottom: 1px solid #8c8c8c;
      background: #c0c0c0;
    }
  `,
  Swap: styled.span`
    display: flex;
    flex-direction: column;
    width: 15px;
    font-size: 8px;
    font-weight: 700;
    line-height: 11px;

    span {
      display: flex;
      align-items: center;
    }
    b {
      color: #7a3da0;
    }
    i {
      font-style: normal;
      color: #1f5a9c;
    }
  `,
  Collapse: styled.button`
    align-self: flex-end;
    margin: 0 7px 4px auto;
    color: #444444;
  `,

  Workspace: styled.div`
    display: flex;
    flex: 1;
    min-height: 0;
    padding-bottom: 2px;
    background: #666666;
  `,
  ThumbPane: styled.aside`
    display: flex;
    flex: none;
    width: 208px;
    border-right: 1px solid #949494;
  `,
  ThumbList: styled.div`
    flex: none;
    width: 188px;
    padding-top: 16px;
    overflow: hidden;
  `,
  ThumbItem: styled.div`
    display: flex;
    height: 96px;
    padding-top: 4px;
  `,
  ThumbMeta: styled.div`
    display: flex;
    flex-direction: column;
    align-items: flex-end;
    gap: 8px;
    width: 20px;
    margin-right: 16px;
    font-size: 15px;
    line-height: 6px;
    color: #f0f0f0;
  `,
  Thumb: styled.button`
    position: relative;
    width: 132px;
    height: 74px;
    outline: 1px solid #8c8c8c;
    box-shadow: ${({ $on }) => ($on ? '0 0 0 1px #666666, 0 0 0 4px #fcc9b5' : 'none')};
    ${wood}
  `,
  ThumbDrawing: styled.svg`
    position: absolute;
    inset: 0;
    width: 100%;
    height: 100%;
    font-family: 'Open Sans', 'DejaVu Sans', sans-serif;
  `,
  Tiny: styled.text`
    direction: rtl;
    fill: ${({ $c }) => $c || '#111111'};
    font-size: ${({ $size }) => $size}px;
    font-weight: ${({ $bold }) => ($bold ? 700 : 400)};
    text-anchor: ${({ $mid }) => ($mid ? 'middle' : 'start')};
  `,
  TinyMath: styled.text`
    fill: ${({ $c }) => $c || '#111111'};
    font-family: 'Liberation Serif', 'DejaVu Sans', serif;
    font-size: ${({ $size }) => $size}px;
    font-style: italic;
  `,

  ScrollBar: styled.div`
    display: flex;
    flex-direction: column;
    flex: none;
    width: 15px;
    padding-bottom: ${({ $foot = 0 }) => $foot}px;
    background: #666666;
  `,
  ScrollButton: styled.button`
    display: flex;
    align-items: center;
    justify-content: center;
    width: 15px;
    height: 16px;
    border: 1px solid #444444;
    background: #999999;
  `,
  ScrollTrack: styled.div`
    flex: 1;
    padding-top: ${({ $before }) => $before}px;
    background: #555555;
  `,
  ScrollThumb: styled.div`
    height: ${({ $h }) => $h}px;
    border: 1px solid #444444;
    background: #999999;
  `,
  ScrollJump: styled.button`
    display: flex;
    justify-content: center;
    height: 17px;
    padding-top: 5px;
  `,

  Stage: styled.main`
    display: flex;
    flex: 1;
    min-width: 0;
    padding-right: 1px;
    border-bottom: 1px solid #949494;
  `,
  StageCenter: styled.div`
    display: flex;
    flex: 1;
    align-items: flex-start;
    justify-content: center;
    min-width: 0;
    padding: 12px 0 14px 2px;
  `,
  Slide: styled.div`
    position: relative;
    height: 100%;
    aspect-ratio: 16 / 9;
    border: 1px solid #8c8c8c;
    ${wood}
  `,
  Paper: styled.div`
    position: absolute;
    top: ${({ $cover }) => ($cover ? '21%' : '7%')};
    right: ${({ $cover }) => ($cover ? '18%' : '4%')};
    bottom: ${({ $cover }) => ($cover ? '20%' : '7%')};
    left: ${({ $cover }) => ($cover ? '18%' : '4%')};
    padding: ${({ $small }) => ($small ? 1 : 9)}px;
    background: #fbfbfb;
    box-shadow: ${({ $small }) =>
      $small ? '0 1px 2px rgba(80, 50, 10, 0.5)' : '2px 9px 8px -5px rgba(80, 55, 15, 0.75)'};

    &::before {
      content: '';
      display: block;
      height: 100%;
      border: 1px solid #86a02c;
    }
  `,
  Clip: styled.div`
    position: absolute;
    top: ${({ $small }) => ($small ? '47%' : '46%')};
    ${({ $side }) => $side}: -1px;
    width: ${({ $cover }) => ($cover ? '20%' : '6%')};
    height: ${({ $small }) => ($small ? '8%' : '9%')};
    min-width: ${({ $small }) => ($small ? 0 : '59px')};
    background: repeating-linear-gradient(180deg, #3b3129 0 2px, #40362e 2px 3px);
    box-shadow: ${({ $small }) => ($small ? 'none' : '0 1px 2px rgba(60, 40, 20, 0.6)')};

    &::before {
      content: '';
      display: ${({ $small }) => ($small ? 'none' : 'block')};
      position: absolute;
      top: -2px;
      bottom: -2px;
      ${({ $side }) => ($side === 'left' ? 'right' : 'left')}: 0;
      width: 3px;
      border-radius: 2px;
      background: linear-gradient(#8a7350 0 2px, transparent 2px calc(100% - 2px), #8a7350 calc(100% - 2px));
    }
  `,
  SlideLines: styled.svg`
    position: absolute;
    inset: 0;
    width: 100%;
    height: 100%;
  `,
  Callout: styled.div`
    position: absolute;
    top: 56px;
    right: 49px;
    width: 98px;
    height: 36px;
    direction: rtl;
    font-size: 23px;
    line-height: 32px;
    color: #111111;

    svg {
      position: absolute;
      inset: 0;
      width: 100%;
      height: 100%;
    }
    span {
      position: relative;
      padding-right: 8px;
    }
  `,
  Line: styled.p`
    position: absolute;
    top: ${({ $top }) => $top}px;
    right: ${({ $right }) => $right}px;
    margin: 0;
    direction: rtl;
    white-space: nowrap;
    font-size: ${({ $size }) => $size}px;
    font-weight: ${({ $bold }) => ($bold ? 700 : 400)};
    line-height: 40px;
    color: ${({ $c }) => $c || '#000000'};
  `,
  Math: styled.p`
    position: absolute;
    top: ${({ $top }) => $top}px;
    left: ${({ $left }) => $left}px;
    margin: 0;
    white-space: pre;
    font-family: 'Liberation Serif', 'DejaVu Sans', serif;
    font-size: ${({ $size }) => $size}px;
    font-style: italic;
    line-height: 60px;
    color: ${({ $c }) => $c || '#000000'};

    i {
      margin: 0 2px;
      font-size: 43px;
      font-style: normal;
      font-weight: 700;
    }
  `,

  StatusBar: styled.footer`
    display: flex;
    align-items: center;
    height: 22px;
    padding: 0 3px 0 8px;
    border-top: 1px solid #444444;
    background: #666666;
    font-size: 11px;
    color: #f0f0f0;
  `,
  StatusButton: styled.button`
    display: flex;
    align-items: center;
    gap: 3px;
    margin: 0 ${({ $mr }) => $mr}px 0 ${({ $ml = 0 }) => $ml}px;
  `,
  View: styled.button`
    display: flex;
    align-items: center;
    justify-content: center;
    width: 40px;
    height: 100%;
    background: ${({ $on }) => ($on ? '#444444' : 'transparent')};
  `,
  Zoom: styled.input`
    width: 100px;
    height: 12px;
    appearance: none;
    background: linear-gradient(#f0f0f0, #f0f0f0) center / 100% 1px no-repeat,
      linear-gradient(#f0f0f0, #f0f0f0) center / 1px 5px no-repeat;

    &::-webkit-slider-thumb {
      appearance: none;
      width: 5px;
      height: 11px;
      background: #ffffff;
    }
  `,

  TaskBar: styled.div`
    display: flex;
    flex: none;
    height: 40px;
    background: linear-gradient(90deg, #041d21 0%, #0a1d20 32%, #17272b 45%, #1b2b30 62%, #182a2b 100%);
    color: #ffffff;
  `,
  Start: styled.button`
    display: flex;
    align-items: center;
    justify-content: center;
    width: 48px;
  `,
  Search: styled.label`
    display: flex;
    align-items: center;
    gap: 9px;
    width: 344px;
    padding: 0 15px 0 9px;
    background: #f2f2f2;
  `,
  SearchInput: styled.input`
    flex: 1;
    min-width: 0;
    font-size: 14px;

    &::placeholder {
      color: #3c3c3c;
      opacity: 1;
    }
  `,
  Apps: styled.div`
    display: flex;
    gap: 1px;
    margin-left: -1px;
  `,
  App: styled.button`
    display: flex;
    align-items: center;
    justify-content: center;
    width: 48px;
    background-color: ${({ $on }) => ($on ? '#364447' : 'transparent')};
    background-image: ${({ $run }) => ($run ? 'linear-gradient(#76b9ed, #76b9ed)' : 'none')};
    background-position: bottom center;
    background-repeat: no-repeat;
    background-size: ${({ $on }) => ($on ? '48px' : '40px')} 2px;

    &:first-child {
      margin-right: 3px;
    }
  `,
  Tray: styled.div`
    display: flex;
    align-items: center;
  `,
  Clock: styled.div`
    display: flex;
    flex-direction: column;
    align-items: center;
    width: 62px;
    line-height: 18px;
  `,
  Peek: styled.button`
    width: 6px;
    height: 100%;
    margin-left: 5px;
    border-left: 1px solid #7d8788;
  `,
  Cursor: styled.svg`
    position: absolute;
    top: 707px;
    left: 697px;
  `,
};
